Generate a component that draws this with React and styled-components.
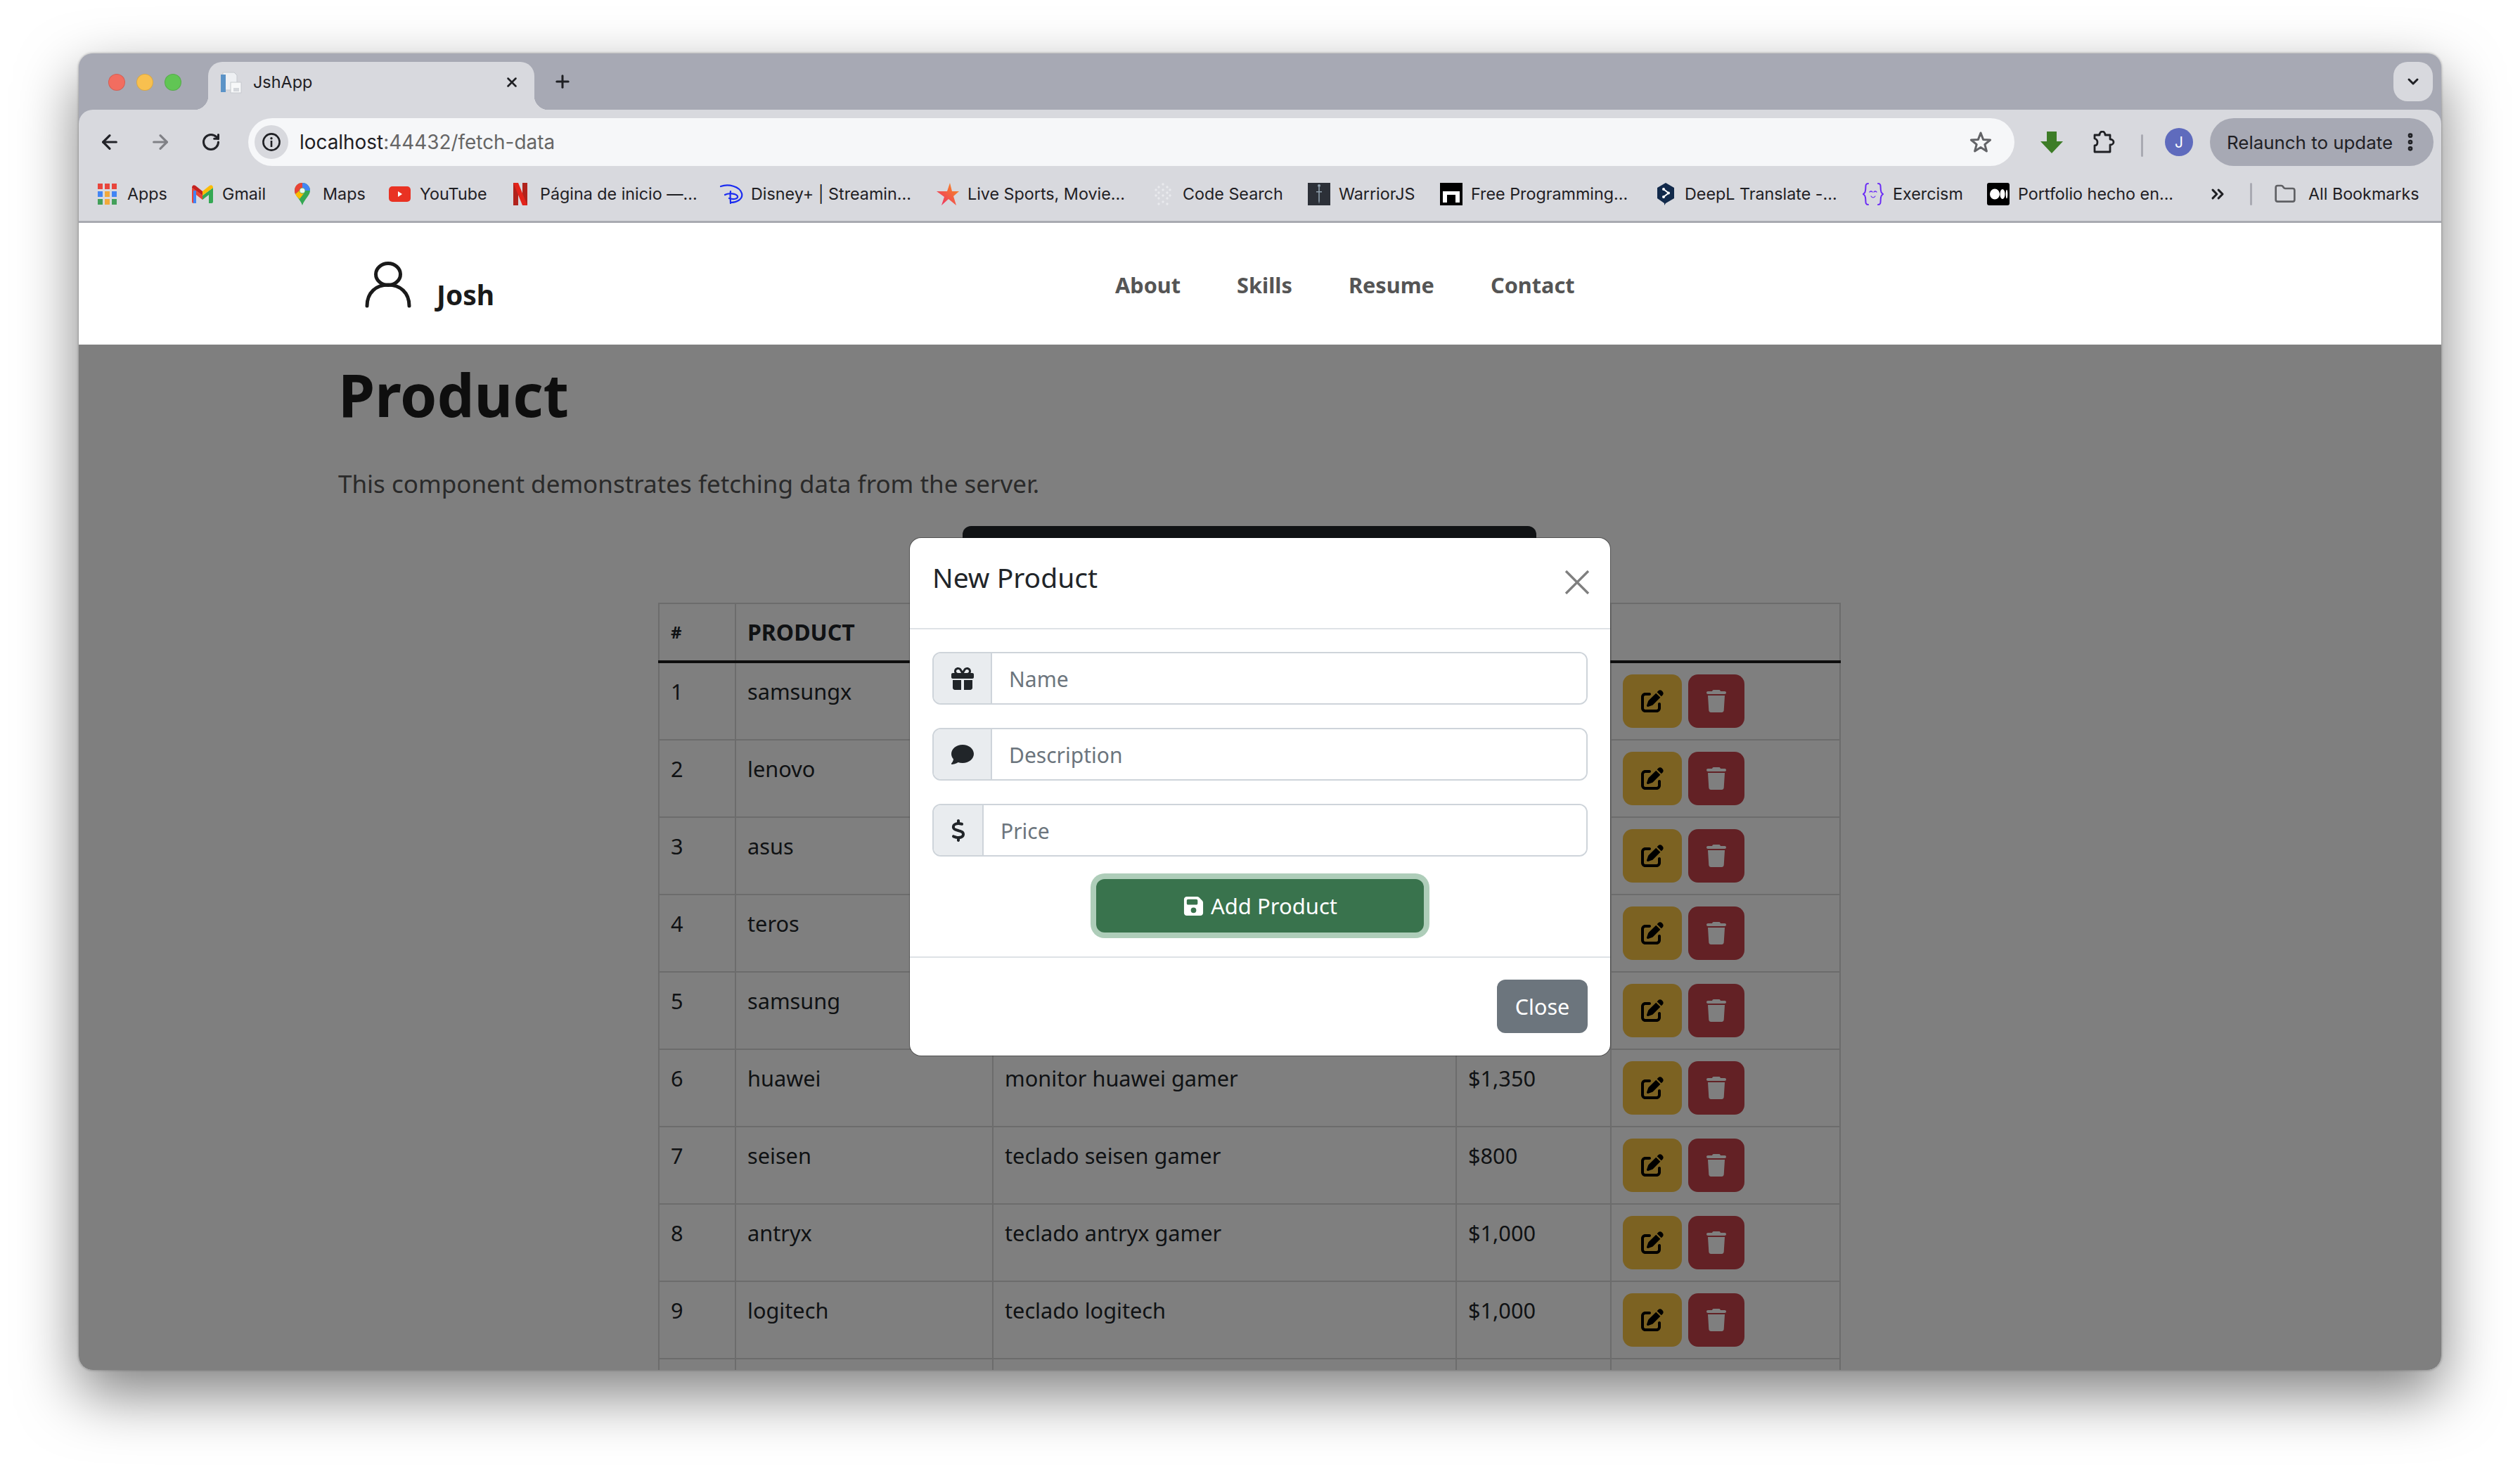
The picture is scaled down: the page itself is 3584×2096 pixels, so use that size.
import React from 'react';
import styled, { createGlobalStyle } from 'styled-components';
import { ArrowLeft, ArrowRight, RotateCw, X, Plus, ChevronDown, EllipsisVertical, ChevronsRight, Folder } from 'lucide-react';
import { FaGift, FaComment, FaDollarSign, FaFloppyDisk, FaPenToSquare, FaTrash } from 'react-icons/fa6';

const Global = createGlobalStyle`
  html, body { margin: 0; padding: 0; background: #fff; }
  * { box-sizing: border-box; }
`;

const PAGE_FONT = `"Noto Sans", "Open Sans", sans-serif`;
const UI_FONT = `Inter, Roboto, sans-serif`;

const Desktop = styled.div`
  width: 3584px; height: 2096px; padding: 76px 112px; background: #fff; overflow: hidden;
`;
const Window = styled.div`
  width: 3360px; height: 1872px; border-radius: 20px; overflow: hidden; display: flex; flex-direction: column;
  background: #a7a9b4;
`;
const WindowShadow = styled.div`
  border-radius: 20px;
  box-shadow: 0 34px 84px rgba(0,0,0,.5), 0 0 3px 1px rgba(0,0,0,.22);
`;
const TitleBar = styled.div`
  height: 80px; flex: none; display: flex; align-items: flex-start; padding: 12px 12px 0 42px; background: #a7a9b4;
`;
const Lights = styled.div`display: flex; gap: 16px; margin-top: 17px; flex: none;`;
const Light = styled.span`
  width: 24px; height: 24px; border-radius: 50%; background: ${p => p.$c}; border: 1px solid rgba(0,0,0,.12);
`;
const Tab = styled.div`
  position: relative; width: 464px; height: 68px; margin-left: 38px; flex: none; background: #d8d9de;
  border-radius: 20px 20px 0 0; display: flex; align-items: center; padding: 0 21px 11px 17px; font: 400 23.4px ${UI_FONT}; color: #1f2024;
  &::before, &::after { content: ""; position: absolute; bottom: 0; width: 20px; height: 20px; }
  &::before { left: -20px; background: radial-gradient(circle at 0 0, transparent 20px, #d8d9de 20.5px); }
  &::after { right: -20px; background: radial-gradient(circle at 100% 0, transparent 20px, #d8d9de 20.5px); }
`;
const TabTitle = styled.span`margin-left: 16px; flex: 1;`;
const NewTab = styled.span`display: flex; margin: 14px 0 0 26px; color: #1f2024;`;
const TabMenu = styled.span`
  margin-left: auto; width: 56px; height: 56px; border-radius: 20px; background: #d8d9de; display: flex; align-items: center; justify-content: center; color: #1f2024;
`;
const Toolbar = styled.div`
  height: 89px; flex: none; background: #d8d9de; border-radius: 20px 20px 0 0; display: flex; align-items: flex-start; padding: 12px 12px 0 24px;
`;
const NavIcon = styled.span`
  width: 40px; height: 68px; margin-right: ${p => p.$gap ?? 32}px; display: flex; align-items: center; justify-content: center; color: ${p => p.$c || '#222328'}; flex: none;
`;
const Address = styled.div`
  width: 2512px; height: 68px; margin-left: 1px; flex: none; background: #f6f7f9; border-radius: 34px; display: flex; align-items: center; padding: 0 32px 0 9px;
  font: 400 27.9px ${UI_FONT}; color: #666;
`;
const InfoDot = styled.span`
  width: 48px; height: 48px; border-radius: 50%; background: #d8d9de; display: flex; align-items: center; justify-content: center; margin-right: 16px; flex: none;
`;
const Host = styled.span`color: #1f2024;`;
const StarWrap = styled.span`margin-left: auto; display: flex;`;
const ToolIcon = styled.span`display: flex; height: 68px; align-items: center; margin-left: ${p => p.$ml}px; flex: none;`;
const Divider = styled.span`
  width: 3px; height: ${p => p.$h || 32}px; background: #a9aab2; border-radius: 2px; margin-left: ${p => p.$ml}px; flex: none; align-self: center;
`;
const Avatar = styled.span`
  width: 40px; height: 40px; border-radius: 50%; background: #5f6bbd; color: #fff; display: flex; align-items: center; justify-content: center;
  font: 400 21px ${UI_FONT}; margin-left: 31px; margin-top: 14px; flex: none;
`;
const Relaunch = styled.span`
  width: 318px; height: 68px; margin-left: 24px; border-radius: 34px; background: #a7a9b4; display: flex; align-items: center; padding-left: 24px; flex: none;
  font: 400 25.9px ${UI_FONT}; color: #1f2024; white-space: nowrap;
  svg { margin-left: 9px; flex: none; }
`;
const Bookmarks = styled.div`
  height: 72px; flex: none; background: #d8d9de; border-bottom: 3px solid #a9aab1; display: flex; align-items: center; padding-left: 27px; padding-bottom: 8px;
  font: 400 23.3px ${UI_FONT}; color: #1f2024;
`;
const Mark = styled.div`
  width: ${p => p.$w}px; flex: none; display: flex; align-items: center; white-space: nowrap;
`;
const AllMarks = styled(Mark)`margin-left: 31px;`;
const MarkIcon = styled.span`
  width: ${p => p.$w}px; height: 32px; margin-right: ${p => p.$gap}px; display: flex; align-items: center; justify-content: center; flex: none;
  svg { display: block; }
`;
const Chevrons = styled.span`display: flex; margin-left: 2px;`;
const Navbar = styled.nav`
  height: 173px; flex: none; background: #fff; display: flex; align-items: flex-start; padding-left: 407px; font-family: ${PAGE_FONT};
`;
const Brand = styled.div`
  display: flex; align-items: flex-end; gap: 36px; padding-top: 55px; width: 1067px; flex: none;
  font-weight: 700; font-size: 39px; color: #1a1a1a; line-height: 1; 
`;
const BrandName = styled.span`position: relative; top: 0;`;
const NavLinks = styled.div`display: flex; gap: 80px; padding-top: 66px;`;
const NavLink = styled.a`font-weight: 700; font-size: 30.7px; line-height: 44px; color: #555;`;
const Content = styled.div`
  position: relative; flex: 1; min-height: 0; overflow: hidden; background: #fff; font-family: ${PAGE_FONT}; color: #212529;
`;
const Container = styled.div`width: 2592px; margin-left: 369px; padding-top: 23px;`;
const Title = styled.h1`margin: 0; font-size: 84px; line-height: 96px; font-weight: 700; color: #1c1c1c;`;
const Lead = styled.p`margin: 55px 0 0; font-size: 35px; line-height: 48px; color: #555;`;
const DarkBlock = styled.div`width: 816px; height: 76px; margin: 36px auto 0; background: #212529; border-radius: 12px;`;
const Table = styled.table`
  width: 1680px; margin: 33px auto 0; border-collapse: collapse; table-layout: fixed; font-size: 30.7px; line-height: 48px;
  border: 2px solid #d8d8d8;
`;
const Th = styled.th`
  width: ${p => p.$w}px; padding: 16px 16px; text-align: left; text-transform: uppercase; font-weight: 700; font-size: ${p => p.$fs || 32}px; border: 2px solid #d8d8d8; border-bottom: 4px solid #1c1c1c; height: 82px;
`;
const Td = styled.td`
  padding: 16px 16px; vertical-align: top; border: 2px solid #d8d8d8; height: 110px;
`;
const Actions = styled.div`display: flex; gap: 9px;`;
const RowBtn = styled.span`
  width: ${p => p.$w}px; height: 76px; border-radius: 14px; background: ${p => p.$bg}; color: ${p => p.$c}; display: flex; align-items: center; justify-content: center; font-size: 32px;
`;
const Overlay = styled.div`
  position: absolute; inset: 0; background: rgba(0,0,0,.5); display: flex; justify-content: center; padding-top: 275px;
`;
const Modal = styled.div`
  width: 996px; height: 736px; background: #fff; border-radius: 16px; display: flex; flex-direction: column; box-shadow: 0 0 0 1px rgba(0,0,0,.35);
`;
const ModalHead = styled.div`
  height: 130px; flex: none; border-bottom: 2px solid #dee2e6; display: flex; align-items: flex-start; justify-content: space-between; padding: 26px 32px 0;
`;
const ModalTitle = styled.h5`margin: 0; font-size: 39px; line-height: 60px; font-weight: 400; color: #212529;`;
const CloseX = styled.span`display: flex; margin: 20px -3px 0 0; color: #7f7f7f;`;
const ModalBody = styled.div`
  flex: 1; padding: 32px 32px 0; display: flex; flex-direction: column; align-items: center; border-bottom: 2px solid #dee2e6;
`;
const Field = styled.div`
  width: 100%; height: 75px; margin-bottom: 33px; display: flex; border: 2px solid #ced4da; border-radius: 12px; overflow: hidden; flex: none;
`;
const Addon = styled.span`
  width: ${p => p.$w}px; flex: none; background: #e9ecef; border-right: 2px solid #ced4da; display: flex; align-items: center; justify-content: center; color: #212529; font-size: 32px;
`;
const Input = styled.input`
  flex: 1; min-width: 0; border: 0; outline: 0; padding: 2px 24px 0; font: 400 30px ${PAGE_FONT}; color: #212529; background: #fff;
  &::placeholder { color: #6c757d; opacity: 1; }
`;
const AddBtn = styled.button`
  width: 466px; height: 76px; margin-top: -1px; border: 0; border-radius: 12px; background: #39734d; color: #fff; box-shadow: 0 0 0 8px #aecdb9;
  display: flex; align-items: center; justify-content: center; gap: 9px; font: 400 31px ${PAGE_FONT};
`;
const ModalFoot = styled.div`height: 139px; flex: none; display: flex; justify-content: flex-end; padding: 31px 32px 0;`;
const CloseBtn = styled.button`
  width: 129px; height: 76px; border: 0; border-radius: 12px; background: #6c757d; color: #fff; font: 400 30.5px ${PAGE_FONT};
`;

const Svg = ({ w = 32, h = 32, vb = '0 0 32 32', children }) => <svg width={w} height={h} viewBox={vb}>{children}</svg>;

const AppsIcon = () => {
  const c = ['#e8453c','#e8453c','#e8453c','#4285f4','#f2a93b','#4285f4','#43a05a','#f2a93b','#43a05a'];
  return <Svg w={27} h={30} vb="0 0 27 30">{c.map((f, i) => <rect key={i} x={(i % 3) * 10} y={Math.floor(i / 3) * 11} width="7" height="8" fill={f} />)}</Svg>;
};
const GmailIcon = () => (
  <Svg w={30} h={26} vb="0 0 30 26">
    <path d="M0 4 L15 15 L15 21 L6 14 V26 H2 Q0 26 0 24 Z" fill="#ea4335" />
    <path d="M30 4 L15 15 V21 L24 14 V26 H28 Q30 26 30 24 Z" fill="#34a853" />
    <path d="M0 3 Q1 -1 5 1 L15 9 V15 L0 4 Z" fill="#c5221f" />
    <path d="M30 3 Q29 -1 25 1 L15 9 V15 L30 4 Z" fill="#fbbc04" />
    <rect x="2" y="8" width="4" height="18" fill="#4285f4" />
    <rect x="24" y="8" width="4" height="18" fill="#34a853" />
  </Svg>
);
const MapsIcon = () => (
  <Svg w={22} h={32} vb="0 0 22 32">
    <path d="M11 0 A11 11 0 0 1 22 11 C22 18 14 23 11 32 C8 23 0 18 0 11 A11 11 0 0 1 11 0Z" fill="#34a853" />
    <path d="M3 3 A11 11 0 0 1 11 0 L11 7 A4 4 0 0 0 7 11 L1 16 C0 14 0 12 0 11 A11 11 0 0 1 3 3Z" fill="#ea4335" />
    <path d="M11 0 A11 11 0 0 1 22 11 L15 11 A4 4 0 0 0 11 7Z" fill="#4285f4" />
    <path d="M1 16 L7 11 A4 4 0 0 0 14 14 L7 23 C5 21 2 19 1 16Z" fill="#fbbc04" />
    <circle cx="11" cy="11" r="3.6" fill="#fff" opacity=".9" />
  </Svg>
);
const YouTubeIcon = () => (
  <Svg w={31} h={22} vb="0 0 31 22">
    <rect width="31" height="22" rx="5" fill="#e93223" />
    <path d="M13 7 L19 11 L13 15Z" fill="#fff" />
  </Svg>
);
const NetflixIcon = () => (
  <Svg w={20} h={32} vb="0 0 20 32">
    <path d="M0 0 H7 V32 L0 32Z" fill="#b1231c" />
    <path d="M13 0 H20 V32 H13Z" fill="#b1231c" />
    <path d="M0 0 H7 L20 32 H13Z" fill="#e2231a" />
  </Svg>
);
const DisneyIcon = () => (
  <Svg w={34} h={28} vb="0 0 34 28">
    <g fill="none" stroke="#1b2cf0" strokeWidth="2.2" strokeLinecap="round">
      <path d="M1 3 C12 -1 28 3 31 13 C33 21 24 26 15 26" />
      <path d="M15 10 C14 16 15 22 15 27" />
      <path d="M7 15 C12 12 23 13 25 17 C26 21 19 22 13 20" />
    </g>
  </Svg>
);
const SportsIcon = () => (
  <Svg w={32} h={32} vb="0 0 32 32">
    <defs><linearGradient id="st" x1="0" y1="1" x2="1" y2="0"><stop offset="0" stopColor="#ee2a6b" /><stop offset="1" stopColor="#f7941d" /></linearGradient></defs>
    <path d="M19 0 L22 12 L32 12 L24 19 L28 32 L17 23 L7 32 L11 20 L0 12 L15 12Z" fill="url(#st)" />
  </Svg>
);
const CodeSearchIcon = () => {
  const dots = [[14,2],[8,6],[20,6],[4,10],[14,10],[24,10],[8,14],[20,14],[4,18],[14,18],[24,18],[8,22],[20,22],[14,27],[8,30],[20,30]];
  return <Svg w={28} h={32} vb="0 0 28 32">{dots.map(([x, y], i) => <circle key={i} cx={x} cy={y} r="1.7" fill="#e9eaed" />)}</Svg>;
};
const WarriorIcon = () => (
  <Svg w={32} h={32} vb="0 0 32 32">
    <rect width="32" height="32" fill="#2c3038" />
    <circle cx="16" cy="4" r="2" fill="#8fa0ad" />
    <path d="M15.2 6 H16.8 V12 H20 V13.5 H16.8 V26 L16 30 L15.2 26 V13.5 H12 V12 H15.2Z" fill="#8fa0ad" />
  </Svg>
);
const FreeProgIcon = () => (
  <Svg w={32} h={32} vb="0 0 32 32">
    <rect width="32" height="32" fill="#000" />
    <path d="M4 12 H28 V28 H22 V17 H10 V28 H4Z" fill="#fff" />
  </Svg>
);
const DeepLIcon = () => (
  <Svg w={26} h={32} vb="0 0 26 32">
    <path d="M13 0 L25 7 V22 L13 29 L11 32 V29 L1 22 V7Z" fill="#122a4b" />
    <path d="M10 9 L17 14.5 L10 20" fill="none" stroke="#fff" strokeWidth="2" />
    <circle cx="10" cy="9" r="2" fill="#fff" /><circle cx="17" cy="14.5" r="2" fill="#fff" /><circle cx="10" cy="20" r="2" fill="#fff" />
  </Svg>
);
const ExercismIcon = () => (
  <Svg w={30} h={32} vb="0 0 30 32">
    <g fill="none" stroke="#6a2bf5" strokeWidth="2" strokeLinecap="round">
      <path d="M8 1 C3 1 5 6 4 11 C4 14 2 15 1 16 C2 17 4 18 4 21 C5 26 3 31 8 31" />
      <path d="M22 1 C27 1 25 6 26 11 C26 14 28 15 29 16 C28 17 26 18 26 21 C25 26 27 31 22 31" />
      <path d="M10 13 q2 -2 4 0 M16 13 q2 -2 4 0 M12 19 q3 4 6 0" strokeWidth="1.2" />
    </g>
  </Svg>
);
const MediumIcon = () => (
  <Svg w={32} h={32} vb="0 0 32 32">
    <rect width="32" height="32" rx="3" fill="#000" />
    <ellipse cx="11" cy="16" rx="7" ry="7.5" fill="#fff" />
    <ellipse cx="22" cy="16" rx="3.5" ry="7" fill="#fff" />
    <ellipse cx="28" cy="16" rx="1.3" ry="6.3" fill="#fff" />
  </Svg>
);
const FavIcon = () => (
  <Svg w={31} h={32} vb="0 0 31 32">
    <path d="M4 2 H20 L24 6 V27 H4Z" fill="#eef0f3" stroke="#c5c9ce" strokeWidth="1" />
    <rect x="1" y="5" width="7" height="25" fill="#5b93c7" />
    <rect x="15" y="16" width="15" height="15" fill="#f7f8f9" stroke="#c5c9ce" strokeWidth="1" />
    <rect x="19" y="24" width="8" height="5" fill="#d5d8dc" />
  </Svg>
);
const InfoIcon = () => (
  <svg width="28" height="28" viewBox="0 0 28 28" fill="none">
    <circle cx="14" cy="14" r="11.6" stroke="#1f2024" strokeWidth="2.6" />
    <circle cx="14" cy="8.8" r="1.7" fill="#1f2024" />
    <rect x="12.7" y="12" width="2.6" height="9" fill="#1f2024" />
  </svg>
);
const StarIcon = () => (
  <svg width="32" height="32" viewBox="0 0 32 32" fill="none">
    <path d="M16 3 L19.6 12.4 L29.6 13 L21.8 19.4 L24.4 29 L16 23.6 L7.6 29 L10.2 19.4 L2.4 13 L12.4 12.4Z" stroke="#626367" strokeWidth="3" strokeLinejoin="round" />
  </svg>
);
const DownloadIcon = () => (
  <svg width="32" height="32" viewBox="0 0 32 32"><path d="M9 1 H23 V15 H32 L16 32 L0 15 H9Z" fill="#3d7c27" /></svg>
);
const PuzzleIcon = () => (
  <svg width="32" height="32" viewBox="0 0 32 32" fill="none">
    <path d="M3 6 H10 C10 3 12 1 14 1 C16 1 18 3 18 6 H25 V12 C28 12 30 14 30 16 C30 18 28 20 25 20 V30 H3 V21 C6 21 7 19 7 16 C7 14 6 12 3 11 Z" stroke="#1f2024" strokeWidth="2.8" strokeLinejoin="round" />
  </svg>
);
const UserIcon = () => (
  <svg width="66" height="66" viewBox="0 0 66 66" fill="none" stroke="#1a1a1a" strokeWidth="5" strokeLinecap="round">
    <ellipse cx="33" cy="18" rx="17.5" ry="15.5" />
    <path d="M3 63 C3 44 16 33 33 33 C50 33 63 44 63 63" />
  </svg>
);
const CloseGlyph = () => (
  <svg width="36" height="34" viewBox="0 0 36 34" stroke="currentColor" strokeWidth="3.4" fill="none"><path d="M2 1 L34 33 M34 1 L2 33" /></svg>
);

const marks = [
  ['Apps', 134, 27, 15, <AppsIcon />],
  ['Gmail', 146, 30, 13, <GmailIcon />],
  ['Maps', 134, 22, 18, <MapsIcon />],
  ['YouTube', 177, 31, 13, <YouTubeIcon />],
  ['Página de inicio —...', 294, 20, 18, <NetflixIcon />],
  ['Disney+ | Streamin...', 308, 34, 10, <DisneyIcon />],
  ['Live Sports, Movie...', 308, 32, 12, <SportsIcon />],
  ['Code Search', 220, 28, 14, <CodeSearchIcon />],
  ['WarriorJS', 188, 32, 12, <WarriorIcon />],
  ['Free Programming...', 308, 32, 12, <FreeProgIcon />],
  ['DeepL Translate -...', 293, 26, 14, <DeepLIcon />],
  ['Exercism', 177, 30, 13, <ExercismIcon />],
  ['Portfolio hecho en...', 312, 32, 12, <MediumIcon />],
];

const rows = [
  [1, 'samsungx', '', ''], [2, 'lenovo', '', ''], [3, 'asus', '', ''], [4, 'teros', '', ''], [5, 'samsung', '', ''],
  [6, 'huawei', 'monitor huawei gamer', '$1,350'],
  [7, 'seisen', 'teclado seisen gamer', '$800'],
  [8, 'antryx', 'teclado antryx gamer', '$1,000'],
  [9, 'logitech', 'teclado logitech', '$1,000'],
];

export default function App() {
  return (
    <>
      <Global />
      <Desktop>
        <WindowShadow>
          <Window>
            <TitleBar>
              <Lights>
                <Light $c="#f26d60" /><Light $c="#f8c04f" /><Light $c="#61c554" />
              </Lights>
              <Tab>
                <FavIcon />
                <TabTitle>JshApp</TabTitle>
                <X size={22} strokeWidth={2.8} />
              </Tab>
              <NewTab><Plus size={28} strokeWidth={2.6} /></NewTab>
              <TabMenu><ChevronDown size={24} strokeWidth={3} /></TabMenu>
            </TitleBar>
            <Toolbar>
              <NavIcon><ArrowLeft size={32} strokeWidth={2.4} /></NavIcon>
              <NavIcon $c="#808186"><ArrowRight size={32} strokeWidth={2.4} /></NavIcon>
              <NavIcon $gap={32}><RotateCw size={28} strokeWidth={2.6} /></NavIcon>
              <Address>
                <InfoDot><InfoIcon /></InfoDot>
                <span><Host>localhost</Host>:44432/fetch-data</span>
                <StarWrap><StarIcon /></StarWrap>
              </Address>
              <ToolIcon $ml={37}><DownloadIcon /></ToolIcon>
              <ToolIcon $ml={42}><PuzzleIcon /></ToolIcon>
              <Divider $ml={37} />
              <Avatar>J</Avatar>
              <Relaunch>Relaunch to update<EllipsisVertical size={32} strokeWidth={3} /></Relaunch>
            </Toolbar>
            <Bookmarks>
              {marks.map(([t, w, iw, g, icon]) => (
                <Mark key={t} $w={w}><MarkIcon $w={iw} $gap={g}>{icon}</MarkIcon>{t}</Mark>
              ))}
              <Mark $w={62}><Chevrons><ChevronsRight size={28} strokeWidth={2.6} /></Chevrons></Mark>
              <Divider $ml={0} $h={32} />
              <AllMarks $w={250}>
                <MarkIcon $w={32} $gap={17}><Folder size={32} strokeWidth={2} color="#5f6064" /></MarkIcon>All Bookmarks
              </AllMarks>
            </Bookmarks>
            <Navbar>
              <Brand><UserIcon /><BrandName>Josh</BrandName></Brand>
              <NavLinks>
                <NavLink>About</NavLink><NavLink>Skills</NavLink><NavLink>Resume</NavLink><NavLink>Contact</NavLink>
              </NavLinks>
            </Navbar>
            <Content>
              <Container>
                <Title>Product</Title>
                <Lead>This component demonstrates fetching data from the server.</Lead>
                <DarkBlock />
                <Table>
                  <thead>
                    <tr>
                      <Th $w={109} $fs={24}>#</Th>
                      <Th $w={366}>Product</Th>
                      <Th $w={659}>Description</Th>
                      <Th $w={220}>Price</Th>
                      <Th $w={326}></Th>
                    </tr>
                  </thead>
                  <tbody>
                    {rows.map(([n, p, d, c]) => (
                      <tr key={n}>
                        <Td>{n}</Td><Td>{p}</Td><Td>{d}</Td><Td>{c}</Td>
                        <Td>
                          <Actions>
                            <RowBtn $w={84} $bg="#f8c444" $c="#000"><FaPenToSquare /></RowBtn>
                            <RowBtn $w={80} $bg="#c6424a" $c="#fff"><FaTrash /></RowBtn>
                          </Actions>
                        </Td>
                      </tr>
                    ))}
                    <tr><Td /><Td /><Td /><Td /><Td /></tr>
                  </tbody>
                </Table>
              </Container>
              <Overlay>
                <Modal>
                  <ModalHead>
                    <ModalTitle>New Product</ModalTitle>
                    <CloseX><CloseGlyph /></CloseX>
                  </ModalHead>
                  <ModalBody>
                    <Field><Addon $w={83}><FaGift /></Addon><Input placeholder="Name" readOnly /></Field>
                    <Field><Addon $w={83}><FaComment /></Addon><Input placeholder="Description" readOnly /></Field>
                    <Field><Addon $w={71}><FaDollarSign /></Addon><Input placeholder="Price" readOnly /></Field>
                    <AddBtn><FaFloppyDisk />Add Product</AddBtn>
                  </ModalBody>
                  <ModalFoot><CloseBtn>Close</CloseBtn></ModalFoot>
                </Modal>
              </Overlay>
            </Content>
          </Window>
        </WindowShadow>
      </Desktop>
    </>
  );
}
